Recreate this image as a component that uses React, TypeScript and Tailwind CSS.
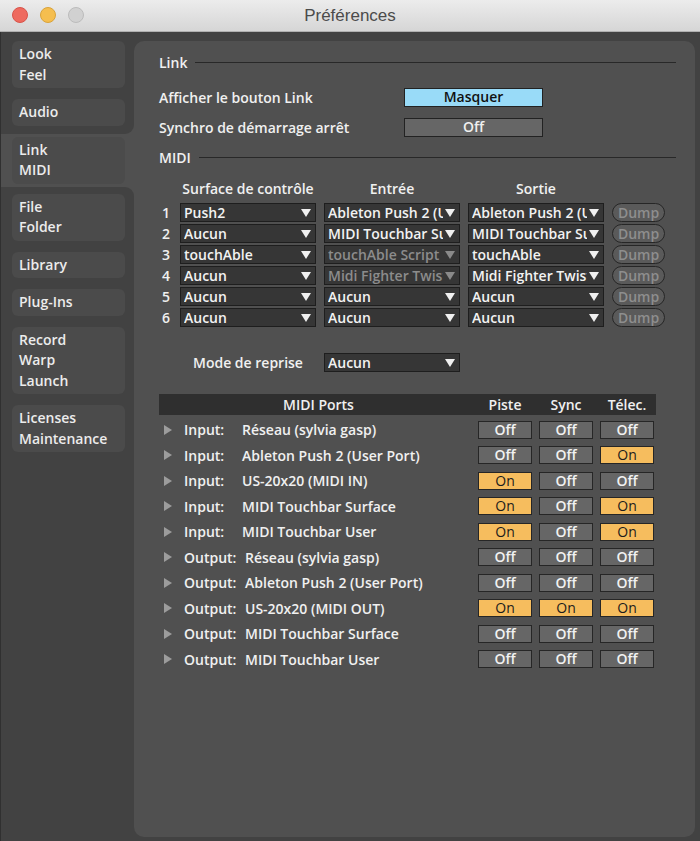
import React from 'react'

const tabsTop = [['Look', 'Feel'], ['Audio']]
const tabSelected = ['Link', 'MIDI']
const tabsBottom = [['File', 'Folder'], ['Library'], ['Plug-Ins'], ['Record', 'Warp', 'Launch'], ['Licenses', 'Maintenance']]

const surfaces = [
  { n: 1, s: 'Push2', e: 'Ableton Push 2 (User Port)', o: 'Ableton Push 2 (User Port)' },
  { n: 2, s: 'Aucun', e: 'MIDI Touchbar Surface', o: 'MIDI Touchbar Surface' },
  { n: 3, s: 'touchAble', e: 'touchAble Script', o: 'touchAble', eDim: true },
  { n: 4, s: 'Aucun', e: 'Midi Fighter Twister', o: 'Midi Fighter Twister', eDim: true },
  { n: 5, s: 'Aucun', e: 'Aucun', o: 'Aucun' },
  { n: 6, s: 'Aucun', e: 'Aucun', o: 'Aucun' },
]

const ports: [string, string, boolean, boolean, boolean][] = [
  ['Input:', 'Réseau (sylvia gasp)', false, false, false],
  ['Input:', 'Ableton Push 2 (User Port)', false, false, true],
  ['Input:', 'US-20x20 (MIDI IN)', true, false, false],
  ['Input:', 'MIDI Touchbar Surface', true, false, true],
  ['Input:', 'MIDI Touchbar User', true, false, true],
  ['Output:', 'Réseau (sylvia gasp)', false, false, false],
  ['Output:', 'Ableton Push 2 (User Port)', false, false, false],
  ['Output:', 'US-20x20 (MIDI OUT)', true, true, true],
  ['Output:', 'MIDI Touchbar Surface', false, false, false],
  ['Output:', 'MIDI Touchbar User', false, false, false],
]

function Tab({ lines }: { lines: string[] }) {
  return (
    <div className="rounded-[6px] bg-[#4b4b4b] px-[7px] py-[3px]">
      {lines.map((l) => (
        <div key={l} className="h-[20.5px] leading-[20.5px] text-[14px] font-semibold text-[#ececec]">{l}</div>
      ))}
    </div>
  )
}

function Arrow({ dim }: { dim?: boolean }) {
  return (
    <svg width="10" height="8" viewBox="0 0 10 8" className="shrink-0">
      <path d="M0 0 L10 0 L5 8 Z" fill={dim ? '#8a8a8a' : '#f0f0f0'} />
    </svg>
  )
}

function Drop({ text, dim }: { text: string; dim?: boolean }) {
  return (
    <div className={`flex h-[19px] w-[136px] items-center gap-[2px] border border-[#1e1e1e] bg-[#363636] pl-[3px] pr-[4px] ${dim ? 'text-[#8c8c8c]' : 'text-[#f2f2f2]'}`}>
      <span className="flex-1 overflow-hidden whitespace-nowrap text-[14px] leading-[17px]">{text}</span>
      <Arrow dim={dim} />
    </div>
  )
}

function Toggle({ on }: { on: boolean }) {
  return (
    <div className={`flex h-[18px] w-[54px] items-center justify-center border border-[#262626] text-[14px] leading-none ${on ? 'bg-[#f6bd5e] text-[#1c1c1c] font-normal' : 'bg-[#666666] text-[#f2f2f2]'}`}>
      {on ? 'On' : 'Off'}
    </div>
  )
}

function Section({ title }: { title: string }) {
  return (
    <div className="flex h-[20px] items-center gap-[8px] pr-[19px]">
      <span className="text-[14px] font-semibold text-[#f0f0f0]">{title}</span>
      <div className="h-px flex-1 bg-[#282828]" />
    </div>
  )
}

export default function App() {
  return (
    <div className="flex h-[841px] w-[700px] flex-col overflow-hidden bg-[#424242] font-['Open_Sans',sans-serif] font-semibold">
      {/* barre de titre */}
      <div className="relative flex h-[32px] shrink-0 items-center justify-center border-b border-[#b0b0b0] bg-gradient-to-b from-[#ececec] to-[#d6d6d6]">
        <div className="absolute left-[12px] top-[7px] flex gap-[12px]">
          <div className="h-[16px] w-[16px] rounded-full border border-[#d8544a] bg-[#ee6a5f]" />
          <div className="h-[16px] w-[16px] rounded-full border border-[#d9a33a] bg-[#f5be4f]" />
          <div className="h-[16px] w-[16px] rounded-full border border-[#bcbcbc] bg-[#d1d1d1]" />
        </div>
        <span className="font-['Liberation_Sans',sans-serif] text-[17px] font-normal text-[#4b4b4b]">Préférences</span>
      </div>

      <div className="flex flex-1 border-l border-[#303030]">
        {/* sidebar */}
        <div className="flex w-[133px] shrink-0 flex-col bg-[#505050]">
          <div className="flex flex-col gap-[11px] rounded-br-[9px] bg-[#424242] pb-[8px] pl-[11px] pr-[9px] pt-[9px]">
            {tabsTop.map((t) => <Tab key={t[0]} lines={t} />)}
          </div>
          <div className="py-[3px] pl-[11px] pr-[9px]">
            <Tab lines={tabSelected} />
          </div>
          <div className="flex flex-1 flex-col gap-[11px] rounded-tr-[9px] bg-[#424242] pl-[11px] pr-[9px] pt-[7px]">
            {tabsBottom.map((t) => <Tab key={t[0]} lines={t} />)}
          </div>
        </div>

        {/* panneau */}
        <div className="mb-[4px] mr-[5px] mt-[9px] flex-1 rounded-[10px] bg-[#505050] pl-[25px] pt-[11px] text-[14px] text-[#f0f0f0]">
          <Section title="Link" />
          <div className="mt-[15px] flex h-[20px] items-center">
            <span className="w-[245px]">Afficher le bouton Link</span>
            <div className="flex h-[19px] w-[139px] items-center justify-center border border-[#222] bg-[#99dbf8] leading-none text-[#111]">Masquer</div>
          </div>
          <div className="mt-[10px] flex h-[20px] items-center">
            <span className="w-[245px]">Synchro de démarrage arrêt</span>
            <div className="flex h-[19px] w-[139px] items-center justify-center border border-[#222] bg-[#666666] leading-none">Off</div>
          </div>
          <div className="mt-[10px]">
            <Section title="MIDI" />
          </div>

          <div className="mt-[11px] flex h-[20px] items-center">
            <span className="w-[21px]" />
            <span className="w-[136px] text-center">Surface de contrôle</span>
            <span className="ml-[8px] w-[136px] text-center">Entrée</span>
            <span className="ml-[8px] w-[136px] text-center">Sortie</span>
          </div>
          <div className="mt-[5px] flex flex-col gap-[2px]">
            {surfaces.map((r) => (
              <div key={r.n} className="flex h-[19px] items-center">
                <span className="w-[21px] pl-[3px]">{r.n}</span>
                <Drop text={r.s} />
                <div className="ml-[8px]"><Drop text={r.e} dim={r.eDim} /></div>
                <div className="ml-[8px]"><Drop text={r.o} /></div>
                <div className="ml-[8px] flex h-[19px] w-[53px] items-center justify-center rounded-full border border-[#262626] bg-[#5a5a5a] leading-none text-[#8e8e8e]">Dump</div>
              </div>
            ))}
          </div>

          <div className="mt-[26px] flex h-[19px] items-center">
            <span className="w-[165px] pl-[34px]">Mode de reprise</span>
            <Drop text="Aucun" />
          </div>

          <div className="mt-[22px] w-[497px]">
            <div className="flex h-[21px] items-center bg-[#2f2f2f] pr-[2px]">
              <span className="flex-1 text-center">MIDI Ports</span>
              <span className="w-[54px] text-center">Piste</span>
              <span className="ml-[7px] w-[54px] text-center">Sync</span>
              <span className="ml-[7px] w-[54px] text-center">Télec.</span>
            </div>
            <div className="pt-[2px]">
              {ports.map((p, i) => (
                <div key={i} className="flex h-[25.5px] items-center pr-[2px]">
                  <svg width="8" height="10" viewBox="0 0 8 10" className="ml-[5px] mr-[12px] shrink-0">
                    <path d="M0 0 L8 5 L0 10 Z" fill="#9c9c9c" />
                  </svg>
                  <span className={p[0] === 'Input:' ? 'w-[58px]' : 'w-[61px]'}>{p[0]}</span>
                  <span className="flex-1 whitespace-nowrap">{p[1]}</span>
                  <Toggle on={p[2]} />
                  <div className="ml-[7px]"><Toggle on={p[3]} /></div>
                  <div className="ml-[7px]"><Toggle on={p[4]} /></div>
                </div>
              ))}
            </div>
          </div>
        </div>
      </div>
    </div>
  )
}
